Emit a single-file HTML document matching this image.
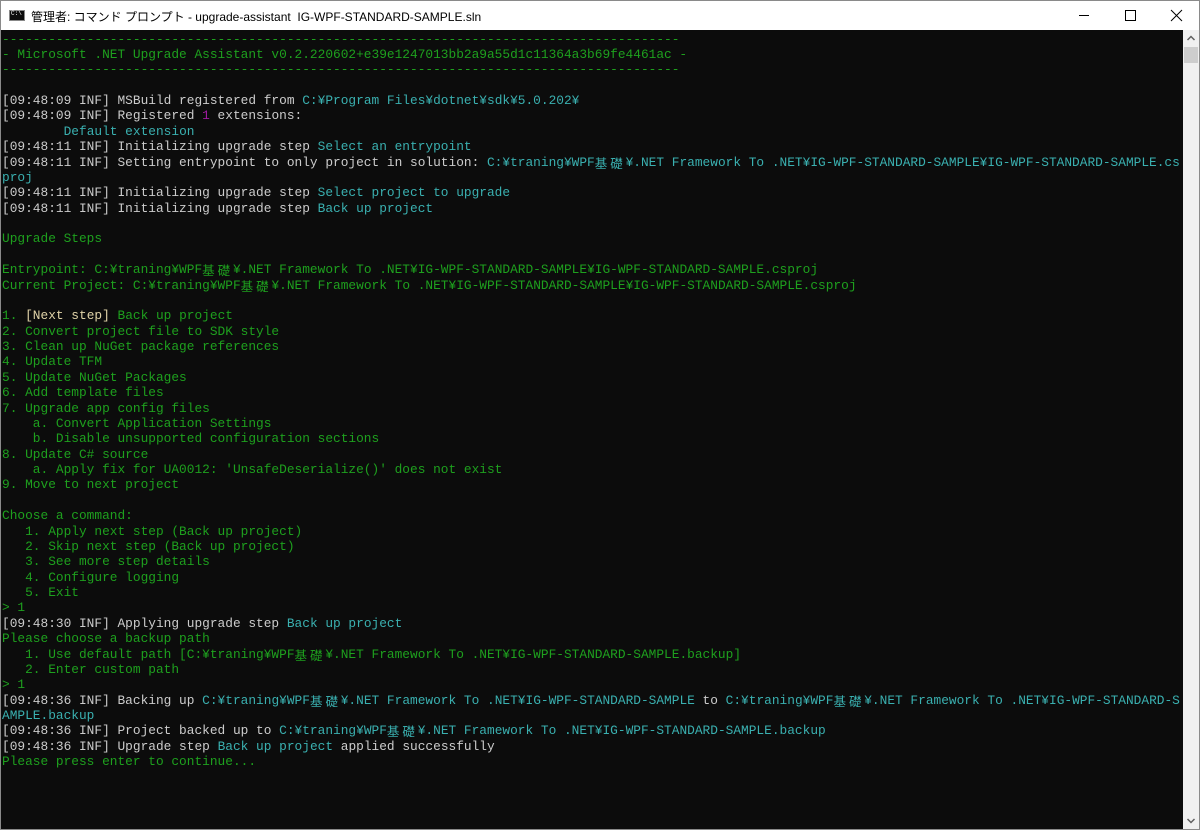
<!DOCTYPE html>
<html><head><meta charset="utf-8">
<style>
html,body{margin:0;padding:0;width:1200px;height:830px;overflow:hidden;background:#fff;}
.win{position:absolute;left:0;top:0;width:1198px;height:828px;border:1px solid #8a8a8a;background:#fff;}
.title{position:absolute;left:0;top:0;width:1198px;height:29px;background:#fff;font-family:"Liberation Sans","Noto Sans CJK JP",sans-serif;font-size:12px;color:#000;}
.title .txt{position:absolute;left:30px;top:7px;}
.icon{position:absolute;left:8px;top:9px;width:16px;height:11px;background:#0c0c0c;border:1px solid #888;box-sizing:border-box;}
.icon:after{content:"C:\\";position:absolute;left:1px;top:-1px;color:#fff;font-size:6px;font-family:"Liberation Mono",monospace;}
.ctl{position:absolute;top:0;height:29px;width:46px;}
.con{position:absolute;left:0;top:29px;width:1182px;height:799px;background:#0c0c0c;overflow:hidden;}
.sb{position:absolute;left:1182px;top:29px;width:16px;height:799px;background:#f0f0f0;}
.thumb{position:absolute;left:1px;top:17px;width:14px;height:16px;background:#cdcdcd;}
pre{margin:0;position:absolute;left:1px;top:1.5px;font-family:"Liberation Mono",monospace;font-size:12.83px;line-height:15.38px;color:#cccccc;white-space:pre;}
.j{display:inline-block;width:30.8px;font-family:"Noto Sans CJK JP",sans-serif;font-size:12.5px;letter-spacing:3px;vertical-align:top;}
.g{color:#1ea01e}.c{color:#3ab0b0}.m{color:#a01aa0}.y{color:#e0d3a8}
</style></head><body>
<div class="win">
<div class="title"><div class="icon"></div><span class="txt">管理者: コマンド プロンプト - upgrade-assistant&nbsp; IG-WPF-STANDARD-SAMPLE.sln</span>
<svg class="ctl" style="left:1060px" viewBox="0 0 46 29"><line x1="18" y1="14.5" x2="28" y2="14.5" stroke="#000" stroke-width="1"/></svg>
<svg class="ctl" style="left:1106px" viewBox="0 0 46 29"><rect x="18.5" y="9.5" width="10" height="10" fill="none" stroke="#000"/></svg>
<svg class="ctl" style="left:1152px" viewBox="0 0 46 29"><path d="M18 9L29 20M29 9L18 20" stroke="#000" stroke-width="1"/></svg>
</div>
<div class="con"><pre><span class="g">----------------------------------------------------------------------------------------
- Microsoft .NET Upgrade Assistant v0.2.220602+e39e1247013bb2a9a55d1c11364a3b69fe4461ac -
----------------------------------------------------------------------------------------</span>

[09:48:09 INF] MSBuild registered from <span class="c">C:¥Program Files¥dotnet¥sdk¥5.0.202¥</span>
[09:48:09 INF] Registered <span class="m">1</span> extensions:
        <span class="c">Default extension</span>
[09:48:11 INF] Initializing upgrade step <span class="c">Select an entrypoint</span>
[09:48:11 INF] Setting entrypoint to only project in solution: <span class="c">C:¥traning¥WPF<span class="j">基礎</span>¥.NET Framework To .NET¥IG-WPF-STANDARD-SAMPLE¥IG-WPF-STANDARD-SAMPLE.cs
proj</span>
[09:48:11 INF] Initializing upgrade step <span class="c">Select project to upgrade</span>
[09:48:11 INF] Initializing upgrade step <span class="c">Back up project</span>
<span class="g">
Upgrade Steps

Entrypoint: C:¥traning¥WPF<span class="j">基礎</span>¥.NET Framework To .NET¥IG-WPF-STANDARD-SAMPLE¥IG-WPF-STANDARD-SAMPLE.csproj
Current Project: C:¥traning¥WPF<span class="j">基礎</span>¥.NET Framework To .NET¥IG-WPF-STANDARD-SAMPLE¥IG-WPF-STANDARD-SAMPLE.csproj

1. <span class="y">[Next step]</span> Back up project
2. Convert project file to SDK style
3. Clean up NuGet package references
4. Update TFM
5. Update NuGet Packages
6. Add template files
7. Upgrade app config files
    a. Convert Application Settings
    b. Disable unsupported configuration sections
8. Update C# source
    a. Apply fix for UA0012: 'UnsafeDeserialize()' does not exist
9. Move to next project

Choose a command:
   1. Apply next step (Back up project)
   2. Skip next step (Back up project)
   3. See more step details
   4. Configure logging
   5. Exit
&gt; 1</span>
[09:48:30 INF] Applying upgrade step <span class="c">Back up project</span>
<span class="g">Please choose a backup path
   1. Use default path [C:¥traning¥WPF<span class="j">基礎</span>¥.NET Framework To .NET¥IG-WPF-STANDARD-SAMPLE.backup]
   2. Enter custom path
&gt; 1</span>
[09:48:36 INF] Backing up <span class="c">C:¥traning¥WPF<span class="j">基礎</span>¥.NET Framework To .NET¥IG-WPF-STANDARD-SAMPLE</span> to <span class="c">C:¥traning¥WPF<span class="j">基礎</span>¥.NET Framework To .NET¥IG-WPF-STANDARD-S
AMPLE.backup</span>
[09:48:36 INF] Project backed up to <span class="c">C:¥traning¥WPF<span class="j">基礎</span>¥.NET Framework To .NET¥IG-WPF-STANDARD-SAMPLE.backup</span>
[09:48:36 INF] Upgrade step <span class="c">Back up project</span> applied successfully
<span class="g">Please press enter to continue...</span></pre></div>
<div class="sb"><svg style="position:absolute;left:0;top:2px" width="16" height="12"><path d="M4.5 8L8 4.5 11.5 8" fill="none" stroke="#606060" stroke-width="1.5"/></svg><div class="thumb"></div><svg style="position:absolute;left:0;bottom:2px" width="16" height="12"><path d="M4.5 4L8 7.5 11.5 4" fill="none" stroke="#606060" stroke-width="1.5"/></svg></div>
</div>
</body></html>
